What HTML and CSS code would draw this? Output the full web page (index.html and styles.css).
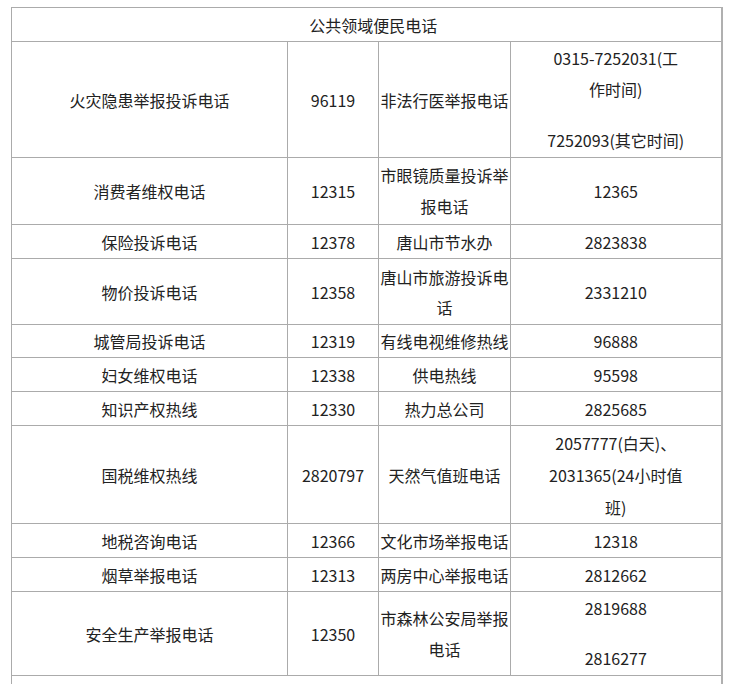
FILE: index.html
```html
<!DOCTYPE html>
<html lang="zh-CN">
<head>
<meta charset="utf-8">
<title>公共领域便民电话</title>
<link rel="stylesheet" href="styles.css">
</head>
<body>
<table class="phones">
  <colgroup>
    <col class="c1"><col class="c2"><col class="c3"><col class="c4">
  </colgroup>
  <tr class="h34"><td colspan="4" class="title">公共领域便民电话</td></tr>
  <tr class="h116">
    <td>火灾隐患举报投诉电话</td><td>96119</td><td>非法行医举报电话</td>
    <td class="multi"><div class="l31">0315-7252031(工<br>作时间)</div><div class="l31 gap20">7252093(其它时间)</div></td>
  </tr>
  <tr class="h67">
    <td>消费者维权电话</td><td>12315</td><td class="l31">市眼镜质量投诉举<br>报电话</td><td>12365</td>
  </tr>
  <tr class="h34">
    <td>保险投诉电话</td><td>12378</td><td>唐山市节水办</td><td>2823838</td>
  </tr>
  <tr class="h66">
    <td>物价投诉电话</td><td>12358</td><td class="l30">唐山市旅游投诉电<br>话</td><td>2331210</td>
  </tr>
  <tr class="h33">
    <td>城管局投诉电话</td><td>12319</td><td>有线电视维修热线</td><td>96888</td>
  </tr>
  <tr class="h34">
    <td>妇女维权电话</td><td>12338</td><td>供电热线</td><td>95598</td>
  </tr>
  <tr class="h34">
    <td>知识产权热线</td><td>12330</td><td>热力总公司</td><td>2825685</td>
  </tr>
  <tr class="h98">
    <td>国税维权热线</td><td>2820797</td><td>天然气值班电话</td>
    <td class="l32">2057777(白天)、<br>2031365(24小时值<br>班)</td>
  </tr>
  <tr class="h34">
    <td>地税咨询电话</td><td>12366</td><td>文化市场举报电话</td><td>12318</td>
  </tr>
  <tr class="h34">
    <td>烟草举报电话</td><td>12313</td><td>两房中心举报电话</td><td>2812662</td>
  </tr>
  <tr class="h84">
    <td>安全生产举报电话</td><td>12350</td><td class="l31">市森林公安局举报<br>电话</td>
    <td class="multi"><div class="l31">2819688</div><div class="l31 gap19">2816277</div></td>
  </tr>
  <tr class="h40"><td colspan="4"></td></tr>
</table>
</body>
</html>
```

FILE: styles.css
```css
html, body {
  margin: 0;
  padding: 0;
  background: #ffffff;
}

body {
  font-family: "Noto Sans CJK SC", "Noto Sans", sans-serif;
  font-size: 16px;
  color: #222222;
}

.phones {
  border-collapse: collapse;
  table-layout: fixed;
  width: 710px;
  margin: 7px 0 0 11px;
}

.c1 { width: 276px; }
.c2 { width: 91px; }
.c3 { width: 132px; }
.c4 { width: 211px; }

.phones td {
  border: 1px solid #ababab;
  padding: 0;
  text-align: center;
  vertical-align: middle;
  white-space: nowrap;
  line-height: 24px;
}

.phones td:last-child {
  border-right: 2px solid #b0b0b0;
}

.phones td.title {
  padding-left: 14px;
}

.l30 { line-height: 30px !important; }
.phones td.l31, .l31 { line-height: 31px; }
.phones td.l32 { line-height: 32px; }
.phones td.l30 { line-height: 30px; }

.gap20 { margin-top: 20px; }
.gap19 { margin-top: 19px; }

.h33 { height: 33px; }
.h34 { height: 34px; }
.h40 { height: 40px; }
.h66 { height: 66px; }
.h67 { height: 67px; }
.h84 { height: 84px; }
.h98 { height: 98px; }
.h116 { height: 116px; }
```
